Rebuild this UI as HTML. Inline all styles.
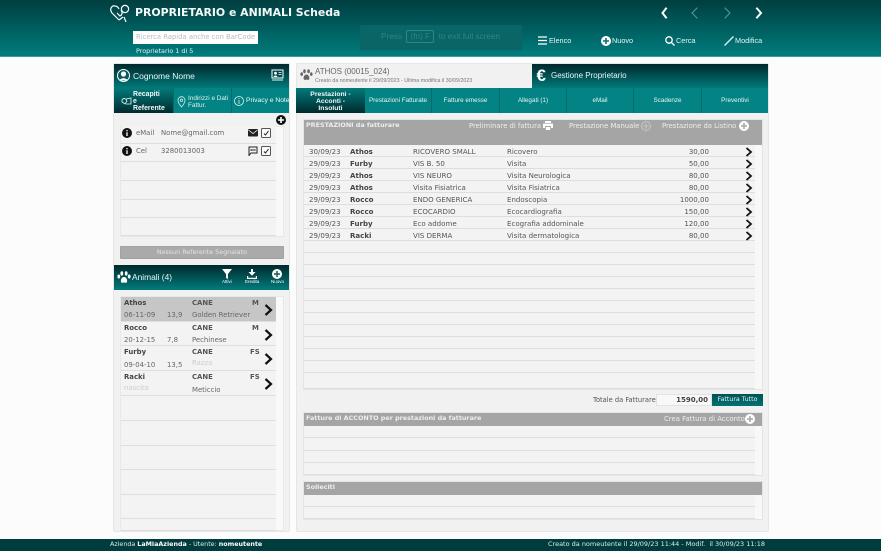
<!DOCTYPE html>
<html><head><meta charset="utf-8">
<style>
html,body{margin:0;padding:0;width:881px;height:551px;overflow:hidden;background:#fcfcfc}
#w{position:absolute;left:0;top:0;width:881px;height:551px;overflow:hidden;filter:blur(.3px)}
*{box-sizing:border-box}
.a{position:absolute;white-space:nowrap}
.v{font-family:"DejaVu Sans","Liberation Sans",sans-serif}
.h{font-family:"Liberation Sans",sans-serif}
.tab{position:absolute;top:88px;height:25px;color:#e8f5f5;font:6.3px/8px "Liberation Sans",sans-serif;display:flex;align-items:center;justify-content:center;text-align:center;border-right:1px solid #056a6a;padding-top:1px}
.row{position:absolute;left:304px;width:451px;height:12px;background:#f3f3f3;border-bottom:1px solid #dedede}
.c{position:absolute;top:1.5px;font:7.05px/10px "DejaVu Sans",sans-serif;color:#555;white-space:nowrap}
.lrow{position:absolute;left:121px;width:155px;background:#f3f3f3;border-bottom:1px solid #dedede}
.t{position:absolute;font:6.9px/10px "DejaVu Sans",sans-serif;color:#666;white-space:nowrap}
b{font-weight:bold}
.top{font-size:7.3px;line-height:10px;color:#e8f5f5}
</style></head><body><div id="w">
<!-- header -->
<div class="a" style="left:0;top:0;width:881px;height:57px;background:linear-gradient(#003e40,#007d7d);border-bottom:1px solid #3d9c9c"></div>
<svg class="a" style="left:110px;top:4px" width="21" height="18" viewBox="0 0 21 18" fill="none" stroke="#fff" stroke-width="1.2"><path d="M9 16 L2 9 C-1 5 2 1 5 2 C7 2 8 3 9 5 M13 13 L9 16 M7 9 L10 12 C12 11 13 9 11 6"/><circle cx="15" cy="5" r="3.6"/><path d="M14 13 L16 18"/></svg>
<div class="a v" style="left:135px;top:6px;font-size:10.9px;line-height:14px;font-weight:bold;color:#f4fafa">PROPRIETARIO e ANIMALI Scheda</div>
<div class="a v" style="left:133px;top:31px;width:125px;height:13px;background:#fff;color:#bbb;font-size:6.8px;line-height:13px;padding-left:3px">Ricerca Rapida anche con BarCode</div>
<div class="a v" style="left:136px;top:46px;font-size:6.4px;line-height:10px;color:#e6f3f3">Proprietario 1 di 5</div>
<div class="a" style="left:360px;top:25px;width:162px;height:25px;background:#0a6566;border-radius:2px"></div>
<div class="a h" style="left:381px;top:31px;font-size:8.2px;line-height:12px;color:#2e8585">Press &nbsp;<span style="border:1px solid #2e8585;border-radius:2px;padding:1px 3px">(fn) F</span>&nbsp; to exit full screen</div>
<svg class="a" style="left:658px;top:5px" width="110" height="16" viewBox="0 0 110 16" fill="none" stroke-linecap="square"><path d="M8 3.5 L4.5 8 L8 12.5" stroke="#fff" stroke-width="2"/><path d="M39 3 L34 8 L39 13" stroke="#5a9a9a" stroke-width="1"/><path d="M67 3 L72 8 L67 13" stroke="#5a9a9a" stroke-width="1"/><path d="M99 3.5 L103 8 L99 12.5" stroke="#fff" stroke-width="2"/></svg>
<svg class="a" style="left:537px;top:35px" width="11" height="11" viewBox="0 0 11 11" stroke="#fff" stroke-width="1.2"><path d="M1 2H10M1 5.5H10M1 9H10"/></svg>
<div class="a h top" style="left:549px;top:36px">Elenco</div>
<svg class="a" style="left:601px;top:36px" width="10" height="10" viewBox="0 0 10 10"><circle cx="5" cy="5" r="5" fill="#fff"/><path d="M5 2V8M2 5H8" stroke="#0b6f70" stroke-width="1.6"/></svg>
<div class="a h top" style="left:612px;top:36px">Nuovo</div>
<svg class="a" style="left:665px;top:36px" width="10" height="10" viewBox="0 0 10 10" fill="none" stroke="#fff" stroke-width="1.3"><circle cx="4" cy="4" r="3.2"/><path d="M6.5 6.5L9.5 9.5"/></svg>
<div class="a h top" style="left:676px;top:36px">Cerca</div>
<svg class="a" style="left:724px;top:36px" width="10" height="10" viewBox="0 0 10 10" fill="none" stroke="#d8e8e8" stroke-width="1.5"><path d="M0.5 9.5L9.5 0.5"/></svg>
<div class="a h top" style="left:735px;top:36px">Modifica</div>

<!-- left panel -->
<div class="a" style="left:113px;top:63px;width:177px;height:469px;background:#f1f1f1;border:1px solid #e6e6e6;border-radius:2px"></div>
<div class="a" style="left:114px;top:64px;width:175px;height:25px;background:linear-gradient(#00282c,#027c7c)"></div>
<div class="a" style="left:114px;top:88px;width:175px;height:25px;background:#038383"></div>
<svg class="a" style="left:117px;top:69px" width="13" height="13" viewBox="0 0 13 13"><circle cx="6.5" cy="6.5" r="6" fill="#0a5a5c" stroke="#fff"/><circle cx="6.5" cy="5" r="2.6" fill="#fff"/><path d="M2.5 11.5C3.5 8.5 9.5 8.5 10.5 11.5Z" fill="#fff"/></svg>
<div class="a h" style="left:133px;top:70px;font-size:8.5px;line-height:12px;color:#e8f5f5">Cognome Nome</div>
<svg class="a" style="left:271px;top:69px" width="13" height="13" viewBox="0 0 13 13"><rect x="1" y="1" width="11" height="8" fill="none" stroke="#fff"/><circle cx="4.5" cy="4.2" r="1.4" fill="#fff"/><path d="M2.5 8C3 6 6 6 6.5 8Z" fill="#fff"/><path d="M7.5 3.5H10.5M7.5 5.5H10.5" stroke="#fff" stroke-width=".8"/><path d="M1 11H12" stroke="#cfe" stroke-width="1"/></svg>
<div class="tab" style="left:114px;width:59px;background:linear-gradient(#027a7a,#002a2e);border-right:0"></div>
<svg class="a" style="left:121px;top:96px" width="11" height="11" viewBox="0 0 11 11" fill="none" stroke="#dff" stroke-width=".8"><path d="M1 4C3 1 5 3 6 5L4 8 1 6ZM5 3L10 2V8L5 8"/></svg>
<div class="a h" style="left:133px;top:91px;font-size:6.9px;line-height:7px;font-weight:bold;color:#f0fafa">Recapiti<br>e<br>Referente</div>
<div class="tab" style="left:173px;width:59px;border-left:1px solid #056a6a;border-right:1px solid #056a6a"></div>
<svg class="a" style="left:177px;top:96px" width="9" height="12" viewBox="0 0 9 12" fill="none" stroke="#cfeeee" stroke-width=".8"><path d="M4.5 11C2 8 1 6 1 4.2A3.5 3.5 0 0 1 8 4.2C8 6 7 8 4.5 11Z"/><circle cx="4.5" cy="4.2" r="1.2"/></svg>
<div class="a h" style="left:188px;top:94.5px;font-size:6.4px;line-height:7.5px;color:#dff2f2">Indirizzi e Dati<br>Fattur.</div>
<svg class="a" style="left:234px;top:96px" width="10" height="10" viewBox="0 0 10 10" fill="none" stroke="#dff2f2" stroke-width=".8"><circle cx="5" cy="5" r="4.5"/><path d="M5 4V8M5 2V3"/></svg>
<div class="a h" style="left:246px;top:97px;font-size:6.7px;line-height:8px;color:#eef8f8">Privacy e Note</div>
<svg class="a" style="left:276px;top:115px" width="10" height="10" viewBox="0 0 10 10"><circle cx="5" cy="5" r="5" fill="#111"/><path d="M5 2V8M2 5H8" stroke="#fff" stroke-width="1.6"/></svg>
<!-- contact grid -->
<div class="a" style="left:120px;top:126px;width:164px;height:111px;background:#f8f8f8;border:1px solid #e8e8e8"></div>
<div class="lrow" style="top:126px;height:18px"></div>
<div class="lrow" style="top:144px;height:18px"></div>
<div class="lrow" style="top:162px;height:19px"></div>
<div class="lrow" style="top:181px;height:19px"></div>
<div class="lrow" style="top:200px;height:18px"></div>
<div class="lrow" style="top:218px;height:18px"></div>
<svg class="a" style="left:122px;top:128px" width="10" height="10" viewBox="0 0 10 10"><circle cx="5" cy="5" r="5" fill="#111"/><path d="M5 4.2V8M5 2V3.2" stroke="#fff" stroke-width="1.3"/></svg>
<svg class="a" style="left:122px;top:146px" width="10" height="10" viewBox="0 0 10 10"><circle cx="5" cy="5" r="5" fill="#111"/><path d="M5 4.2V8M5 2V3.2" stroke="#fff" stroke-width="1.3"/></svg>
<div class="t" style="left:136px;top:128px">eMail</div>
<div class="t" style="left:161px;top:128px">Nome@gmail.com</div>
<div class="t" style="left:136px;top:146px">Cel</div>
<div class="t" style="left:161px;top:146px">3280013003</div>
<svg class="a" style="left:248px;top:129px" width="10" height="8" viewBox="0 0 10 8"><rect width="10" height="7.5" rx="1" fill="#222"/><path d="M.5 1L5 4.5 9.5 1" stroke="#fff" stroke-width=".7" fill="none"/></svg>
<svg class="a" style="left:248px;top:146px" width="10" height="10" viewBox="0 0 10 10" fill="none"><path d="M1 1H9V7H3L1 9.5Z" stroke="#222" stroke-width="1"/><path d="M2.5 4H7.5" stroke="#222" stroke-width="1.5" stroke-dasharray="1.3 .6"/></svg>
<svg class="a" style="left:260.5px;top:128px" width="10" height="10" viewBox="0 0 10 10" fill="#fafafa"><rect x=".5" y=".5" width="9" height="9" rx="1" stroke="#555"/><path d="M3 5.5L4.5 7 7.5 3" stroke="#222" fill="none"/></svg>
<svg class="a" style="left:260.5px;top:146px" width="10" height="10" viewBox="0 0 10 10" fill="#fafafa"><rect x=".5" y=".5" width="9" height="9" rx="1" stroke="#555"/><path d="M3 5.5L4.5 7 7.5 3" stroke="#222" fill="none"/></svg>
<div class="a v" style="left:120px;top:246px;width:164px;height:13px;background:#aaa;border:1px solid #a2a2a2;border-radius:1px;color:#e4e4e4;font-size:6.35px;line-height:11px;text-align:center">Nessun Referente Segnalato</div>
<!-- animali -->
<div class="a" style="left:114px;top:265px;width:175px;height:25px;background:linear-gradient(#00282c,#027c7c)"></div>
<svg class="a" style="left:117px;top:271px" width="14" height="13" viewBox="0 0 14 13" fill="#fff"><ellipse cx="1.8" cy="5.5" rx="1.4" ry="2"/><ellipse cx="4.8" cy="2.5" rx="1.4" ry="2.2"/><ellipse cx="9.2" cy="2.5" rx="1.4" ry="2.2"/><ellipse cx="12.2" cy="5.5" rx="1.4" ry="2"/><path d="M7 6C4.5 6 3.5 9 4 11C5 12.5 6 11.5 7 11.5C8 11.5 9 12.5 10 11C10.5 9 9.5 6 7 6Z"/></svg>
<div class="a h" style="left:132px;top:271px;font-size:8.4px;line-height:12px;color:#e8f5f5">Animali (4)</div>
<svg class="a" style="left:222px;top:269px" width="10" height="10" viewBox="0 0 10 10" fill="#fff"><path d="M0 0H10L6 5V10L4 9V5Z"/></svg>
<div class="a h" style="left:222px;top:279px;font-size:4.5px;line-height:6px;color:#fff">Attivi</div>
<svg class="a" style="left:247px;top:269px" width="10" height="10" viewBox="0 0 10 10" fill="#fff"><path d="M4 0H6V3H8.5L5 6.8 1.5 3H4Z"/><path d="M0 7H1.2V8.8H8.8V7H10V10H0Z"/></svg>
<div class="a h" style="left:245px;top:279px;font-size:4.5px;line-height:6px;color:#fff">Eredita</div>
<svg class="a" style="left:272px;top:269px" width="10" height="10" viewBox="0 0 10 10"><circle cx="5" cy="5" r="5" fill="#fff"/><path d="M5 2V8M2 5H8" stroke="#0b5f60" stroke-width="1.5"/></svg>
<div class="a h" style="left:271px;top:279px;font-size:4.5px;line-height:6px;color:#fff">Nuovo</div>
<div class="a" style="left:120px;top:296px;width:164px;height:235px;background:#f9f9f9;border:1px solid #e8e8e8"></div>
<div class="lrow" style="top:297px;height:24.6px;background:#c6c6c6"></div>
<div class="lrow" style="top:321.6px;height:24.7px"></div>
<div class="lrow" style="top:346.3px;height:24.7px"></div>
<div class="lrow" style="top:371px;height:24.7px"></div>
<div class="lrow" style="top:395.7px;height:25px"></div>
<div class="lrow" style="top:420.7px;height:25px"></div>
<div class="lrow" style="top:445.7px;height:24.5px"></div>
<div class="lrow" style="top:470.2px;height:24.5px"></div>
<div class="lrow" style="top:494.7px;height:24.5px"></div>
<div class="lrow" style="top:519.2px;height:11.5px"></div>
<div class="t" style="left:124px;top:298px;color:#444"><b>Athos</b></div><div class="t" style="left:192px;top:298px;color:#555"><b>CANE</b></div><div class="t" style="left:252px;top:298px;color:#555"><b>M</b></div>
<div class="t" style="left:124px;top:310px">06-11-09</div><div class="t" style="left:167px;top:310px">13,9</div><div class="t" style="left:192px;top:310px">Golden Retriever</div>
<div class="t" style="left:124px;top:323px;color:#444"><b>Rocco</b></div><div class="t" style="left:192px;top:323px;color:#555"><b>CANE</b></div><div class="t" style="left:252px;top:323px;color:#555"><b>M</b></div>
<div class="t" style="left:124px;top:335px">20-12-15</div><div class="t" style="left:167px;top:335px">7,8</div><div class="t" style="left:192px;top:335px">Pechinese</div>
<div class="t" style="left:124px;top:347px;color:#444"><b>Furby</b></div><div class="t" style="left:192px;top:347px;color:#555"><b>CANE</b></div><div class="t" style="left:250px;top:347px;color:#555"><b>FS</b></div>
<div class="t" style="left:124px;top:360px">09-04-10</div><div class="t" style="left:167px;top:360px">13,5</div><div class="t" style="left:192px;top:358px;color:#ccc">Razza</div>
<div class="t" style="left:124px;top:372px;color:#444"><b>Racki</b></div><div class="t" style="left:192px;top:372px;color:#555"><b>CANE</b></div><div class="t" style="left:250px;top:372px;color:#555"><b>FS</b></div>
<div class="t" style="left:124px;top:383px;color:#ccc">nascita</div><div class="t" style="left:192px;top:385px">Meticcio</div>
<svg class="a" style="left:264px;top:304px" width="9" height="12" viewBox="0 0 9 12" fill="none" stroke="#111" stroke-width="2.2"><path d="M1.5 1L7 6 1.5 11"/></svg>
<svg class="a" style="left:264px;top:329px" width="9" height="12" viewBox="0 0 9 12" fill="none" stroke="#111" stroke-width="2.2"><path d="M1.5 1L7 6 1.5 11"/></svg>
<svg class="a" style="left:264px;top:353px" width="9" height="12" viewBox="0 0 9 12" fill="none" stroke="#111" stroke-width="2.2"><path d="M1.5 1L7 6 1.5 11"/></svg>
<svg class="a" style="left:264px;top:378px" width="9" height="12" viewBox="0 0 9 12" fill="none" stroke="#111" stroke-width="2.2"><path d="M1.5 1L7 6 1.5 11"/></svg>

<!-- right panel -->
<div class="a" style="left:296px;top:63px;width:473px;height:469px;background:#f1f1f1;border:1px solid #e6e6e6;border-radius:2px"></div>
<div class="a" style="left:532px;top:64px;width:236px;height:25px;background:linear-gradient(#00282c,#027c7c)"></div>
<div class="a" style="left:296px;top:88px;width:472px;height:25px;background:#038383"></div>
<svg class="a" style="left:300px;top:69px" width="13" height="12" viewBox="0 0 14 13" fill="#666"><ellipse cx="1.8" cy="5.5" rx="1.4" ry="2"/><ellipse cx="4.8" cy="2.5" rx="1.4" ry="2.2"/><ellipse cx="9.2" cy="2.5" rx="1.4" ry="2.2"/><ellipse cx="12.2" cy="5.5" rx="1.4" ry="2"/><path d="M7 6C4.5 6 3.5 9 4 11C5 12.5 6 11.5 7 11.5C8 11.5 9 12.5 10 11C10.5 9 9.5 6 7 6Z"/></svg>
<div class="a h" style="left:315px;top:66px;font-size:8px;line-height:12px;color:#666">ATHOS (00015_024)</div>
<div class="a h" style="left:315px;top:77px;font-size:5.3px;line-height:8px;color:#777">Creato da nomeutente il 29/09/2023 - Ultima modifica il 30/09/2023</div>
<div class="a h" style="left:536.5px;top:66px;font-size:17px;line-height:20px;font-weight:bold;color:#fff">€</div>
<div class="a h" style="left:551px;top:70px;font-size:8px;line-height:12px;color:#e8f5f5">Gestione Proprietario</div>
<div class="tab" style="left:296px;width:69px;background:linear-gradient(#027a7a,#002a2e);border-right:0;font-size:6.8px;font-weight:bold;line-height:7px;color:#f0fafa">Prestazioni -<br>Acconti -<br>Insoluti</div>
<div class="tab" style="left:365px;width:67px">Prestazioni Fatturate</div>
<div class="tab" style="left:432px;width:68px">Fatture emesse</div>
<div class="tab" style="left:500px;width:67px">Allegati (1)</div>
<div class="tab" style="left:567px;width:67px">eMail</div>
<div class="tab" style="left:634px;width:68px">Scadenze</div>
<div class="tab" style="left:702px;width:66px;border-right:0">Preventivi</div>

<!-- prestazioni -->
<div class="a" style="left:303px;top:119px;width:460px;height:271px;background:#f8f8f8;border:1px solid #e4e4e4"></div>
<div class="a" style="left:304px;top:120px;width:458px;height:25px;background:#a5a5a5"></div>
<div class="a v" style="left:306px;top:120px;font-size:6.4px;line-height:10px;font-weight:bold;color:#eee">PRESTAZIONI da fatturare</div>
<div class="a v" style="left:469px;top:121px;font-size:6.8px;line-height:10px;color:#eee">Preliminare di fattura</div>
<svg class="a" style="left:543px;top:121px" width="10" height="9" viewBox="0 0 10 9" fill="#fff"><path d="M2 0H8V2H2ZM0 2.6H10V7H8V5H2V7H0ZM2.8 6H7.2V9H2.8Z"/></svg>
<div class="a v" style="left:569px;top:121px;font-size:6.8px;line-height:10px;color:#eee">Prestazione Manuale</div>
<svg class="a" style="left:641px;top:121px" width="10" height="10" viewBox="0 0 10 10" fill="none" stroke="#c6c6c6"><circle cx="5" cy="5" r="4.5"/><path d="M5 2V8M2 5H8"/></svg>
<div class="a v" style="left:662px;top:121px;font-size:6.8px;line-height:10px;color:#eee">Prestazione da Listino</div>
<svg class="a" style="left:739px;top:121px" width="10" height="10" viewBox="0 0 10 10"><circle cx="5" cy="5" r="5" fill="#fff"/><path d="M5 2V8M2 5H8" stroke="#a5a5a5" stroke-width="1.5"/></svg>

<div class="row" style="top:145px"><span class="c" style="left:5px">30/09/23</span><span class="c" style="left:46px;color:#444"><b>Athos</b></span><span class="c" style="left:109px">RICOVERO SMALL</span><span class="c" style="left:203px">Ricovero</span><span class="c" style="right:46px">30,00</span></div>
<div class="row" style="top:157px"><span class="c" style="left:5px">29/09/23</span><span class="c" style="left:46px;color:#444"><b>Furby</b></span><span class="c" style="left:109px">VIS B. 50</span><span class="c" style="left:203px">Visita</span><span class="c" style="right:46px">50,00</span></div>
<div class="row" style="top:169px"><span class="c" style="left:5px">29/09/23</span><span class="c" style="left:46px;color:#444"><b>Athos</b></span><span class="c" style="left:109px">VIS NEURO</span><span class="c" style="left:203px">Visita Neurologica</span><span class="c" style="right:46px">80,00</span></div>
<div class="row" style="top:181px"><span class="c" style="left:5px">29/09/23</span><span class="c" style="left:46px;color:#444"><b>Athos</b></span><span class="c" style="left:109px">Visita Fisiatrica</span><span class="c" style="left:203px">Visita Fisiatrica</span><span class="c" style="right:46px">80,00</span></div>
<div class="row" style="top:193px"><span class="c" style="left:5px">29/09/23</span><span class="c" style="left:46px;color:#444"><b>Rocco</b></span><span class="c" style="left:109px">ENDO GENERICA</span><span class="c" style="left:203px">Endoscopia</span><span class="c" style="right:46px">1000,00</span></div>
<div class="row" style="top:205px"><span class="c" style="left:5px">29/09/23</span><span class="c" style="left:46px;color:#444"><b>Rocco</b></span><span class="c" style="left:109px">ECOCARDIO</span><span class="c" style="left:203px">Ecocardiografia</span><span class="c" style="right:46px">150,00</span></div>
<div class="row" style="top:217px"><span class="c" style="left:5px">29/09/23</span><span class="c" style="left:46px;color:#444"><b>Furby</b></span><span class="c" style="left:109px">Eco addome</span><span class="c" style="left:203px">Ecografia addominale</span><span class="c" style="right:46px">120,00</span></div>
<div class="row" style="top:229px"><span class="c" style="left:5px">29/09/23</span><span class="c" style="left:46px;color:#444"><b>Racki</b></span><span class="c" style="left:109px">VIS DERMA</span><span class="c" style="left:203px">Visita dermatologica</span><span class="c" style="right:46px">80,00</span></div>
<div class="row" style="top:241px"></div><div class="row" style="top:253px"></div><div class="row" style="top:265px"></div><div class="row" style="top:277px"></div><div class="row" style="top:289px"></div><div class="row" style="top:301px"></div><div class="row" style="top:313px"></div><div class="row" style="top:325px"></div><div class="row" style="top:337px"></div><div class="row" style="top:349px"></div><div class="row" style="top:361px"></div><div class="row" style="top:373px;height:16px"></div>
<svg class="a" style="left:745px;top:147px" width="8" height="10" viewBox="0 0 8 10" fill="none" stroke="#111" stroke-width="1.8"><path d="M1.5 1L6 5 1.5 9"/></svg>
<svg class="a" style="left:745px;top:159px" width="8" height="10" viewBox="0 0 8 10" fill="none" stroke="#111" stroke-width="1.8"><path d="M1.5 1L6 5 1.5 9"/></svg>
<svg class="a" style="left:745px;top:171px" width="8" height="10" viewBox="0 0 8 10" fill="none" stroke="#111" stroke-width="1.8"><path d="M1.5 1L6 5 1.5 9"/></svg>
<svg class="a" style="left:745px;top:183px" width="8" height="10" viewBox="0 0 8 10" fill="none" stroke="#111" stroke-width="1.8"><path d="M1.5 1L6 5 1.5 9"/></svg>
<svg class="a" style="left:745px;top:195px" width="8" height="10" viewBox="0 0 8 10" fill="none" stroke="#111" stroke-width="1.8"><path d="M1.5 1L6 5 1.5 9"/></svg>
<svg class="a" style="left:745px;top:207px" width="8" height="10" viewBox="0 0 8 10" fill="none" stroke="#111" stroke-width="1.8"><path d="M1.5 1L6 5 1.5 9"/></svg>
<svg class="a" style="left:745px;top:219px" width="8" height="10" viewBox="0 0 8 10" fill="none" stroke="#111" stroke-width="1.8"><path d="M1.5 1L6 5 1.5 9"/></svg>
<svg class="a" style="left:745px;top:231px" width="8" height="10" viewBox="0 0 8 10" fill="none" stroke="#111" stroke-width="1.8"><path d="M1.5 1L6 5 1.5 9"/></svg>

<!-- totale -->
<div class="a v" style="left:593px;top:395px;font-size:6.7px;line-height:10px;color:#555">Totale da Fatturare</div>
<div class="a v" style="left:656px;top:393.5px;width:56px;height:12.5px;background:#f8f8f8;border:1px solid #e2e2e2;font-size:7px;line-height:11px;font-weight:bold;color:#444;text-align:right;padding-right:3px">1590,00</div>
<div class="a v" style="left:712px;top:393.5px;width:51px;height:12.5px;background:linear-gradient(#005254,#027272);font-size:6.3px;line-height:12px;color:#e8f5f5;text-align:center">Fattura Tutto</div>

<!-- acconto -->
<div class="a" style="left:303px;top:412px;width:460px;height:64px;background:#f8f8f8;border:1px solid #e4e4e4"></div>
<div class="a" style="left:304px;top:413px;width:458px;height:13px;background:#a5a5a5"></div>
<div class="a v" style="left:306px;top:413px;font-size:6.4px;line-height:10px;font-weight:bold;color:#eee">Fatture di ACCONTO per prestazioni da fatturare</div>
<div class="a v" style="left:664px;top:414px;font-size:6.9px;line-height:10px;color:#eee">Crea Fattura di Acconto</div>
<svg class="a" style="left:745px;top:414px" width="10" height="10" viewBox="0 0 10 10"><circle cx="5" cy="5" r="5" fill="#fff"/><path d="M5 2V8M2 5H8" stroke="#a5a5a5" stroke-width="1.5"/></svg>
<div class="row" style="top:426px;height:12px"></div><div class="row" style="top:438px;height:13px"></div><div class="row" style="top:451px;height:12px"></div><div class="row" style="top:463px;height:12px"></div>

<!-- solleciti -->
<div class="a" style="left:303px;top:481px;width:460px;height:39px;background:#f8f8f8;border:1px solid #e4e4e4"></div>
<div class="a" style="left:304px;top:482px;width:458px;height:13px;background:#a5a5a5"></div>
<div class="a v" style="left:306px;top:482px;font-size:6.4px;line-height:10px;font-weight:bold;color:#eee">Solleciti</div>
<div class="row" style="top:495px;height:12px"></div><div class="row" style="top:507px;height:12px"></div>

<!-- footer -->
<div class="a" style="left:0;top:538.5px;width:881px;height:12.5px;background:#003c3e"></div>
<div class="a v" style="left:110px;top:540px;font-size:6.35px;line-height:10px;color:#dcecec">Azienda <b style="color:#fff">LaMiaAzienda</b> - Utente: <b style="color:#fff">nomeutente</b></div>
<div class="a v" style="left:548px;top:539px;font-size:6.5px;line-height:10px;color:#dcecec">Creato da nomeutente il 29/09/23 11:44 - Modif. &nbsp;il 30/09/23 11:18</div>
</div></body></html>
